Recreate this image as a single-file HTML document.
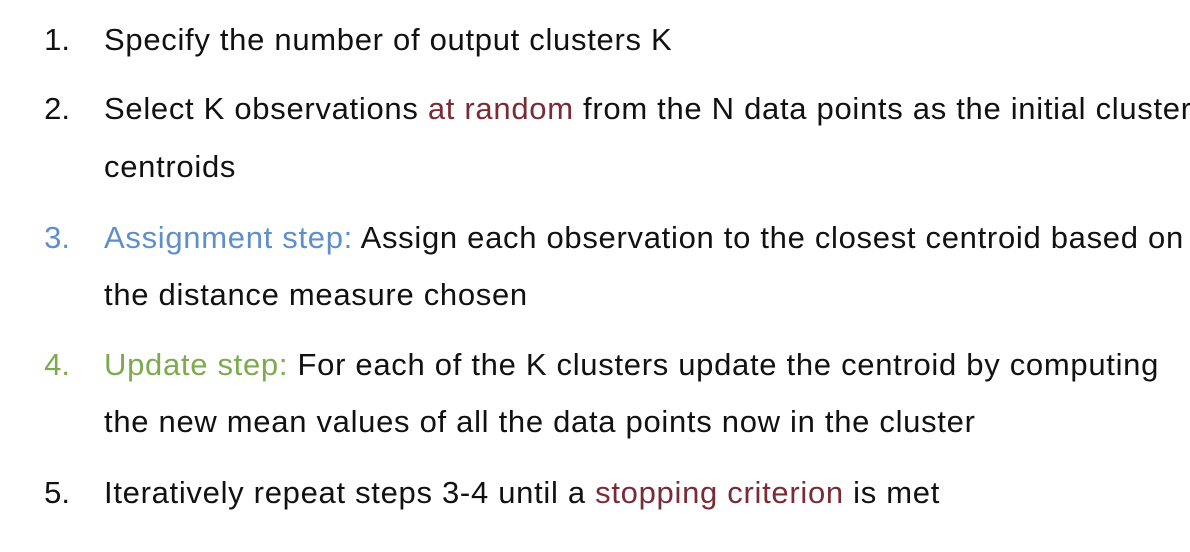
<!DOCTYPE html>
<html><head><meta charset="utf-8">
<style>
html,body{margin:0;padding:0;background:#fff;width:1190px;height:552px;overflow:hidden;}
body{font-family:"Liberation Sans",sans-serif;font-size:31px;color:#111;letter-spacing:0.7px;}
.l{position:absolute;left:104px;white-space:nowrap;line-height:36px;}
.n{position:absolute;width:70px;left:0;text-align:right;white-space:nowrap;line-height:36px;letter-spacing:0;}
.r{color:#7b2b37}.b{color:#5e8fcb}.g{color:#7cab4e}
</style></head><body>
<div class="n" style="top:22px">1.</div>
<div class="l" style="top:22px">Specify the number of output clusters K</div>
<div class="n" style="top:91px">2.</div>
<div class="l" style="top:91px">Select K observations <span class="r">at random</span> from the N data points as the initial cluster</div>
<div class="l" style="top:149px">centroids</div>
<div class="n b" style="top:220px">3.</div>
<div class="l" style="top:220px"><span class="b">Assignment step:</span> Assign each observation to the closest centroid based on</div>
<div class="l" style="top:277px">the distance measure chosen</div>
<div class="n g" style="top:347px">4.</div>
<div class="l" style="top:347px"><span class="g">Update step:</span> For each of the K clusters update the centroid by computing</div>
<div class="l" style="top:404px">the new mean values of all the data points now in the cluster</div>
<div class="n" style="top:475px">5.</div>
<div class="l" style="top:475px">Iteratively repeat steps 3-4 until a <span class="r">stopping criterion</span> is met</div>
</body></html>
